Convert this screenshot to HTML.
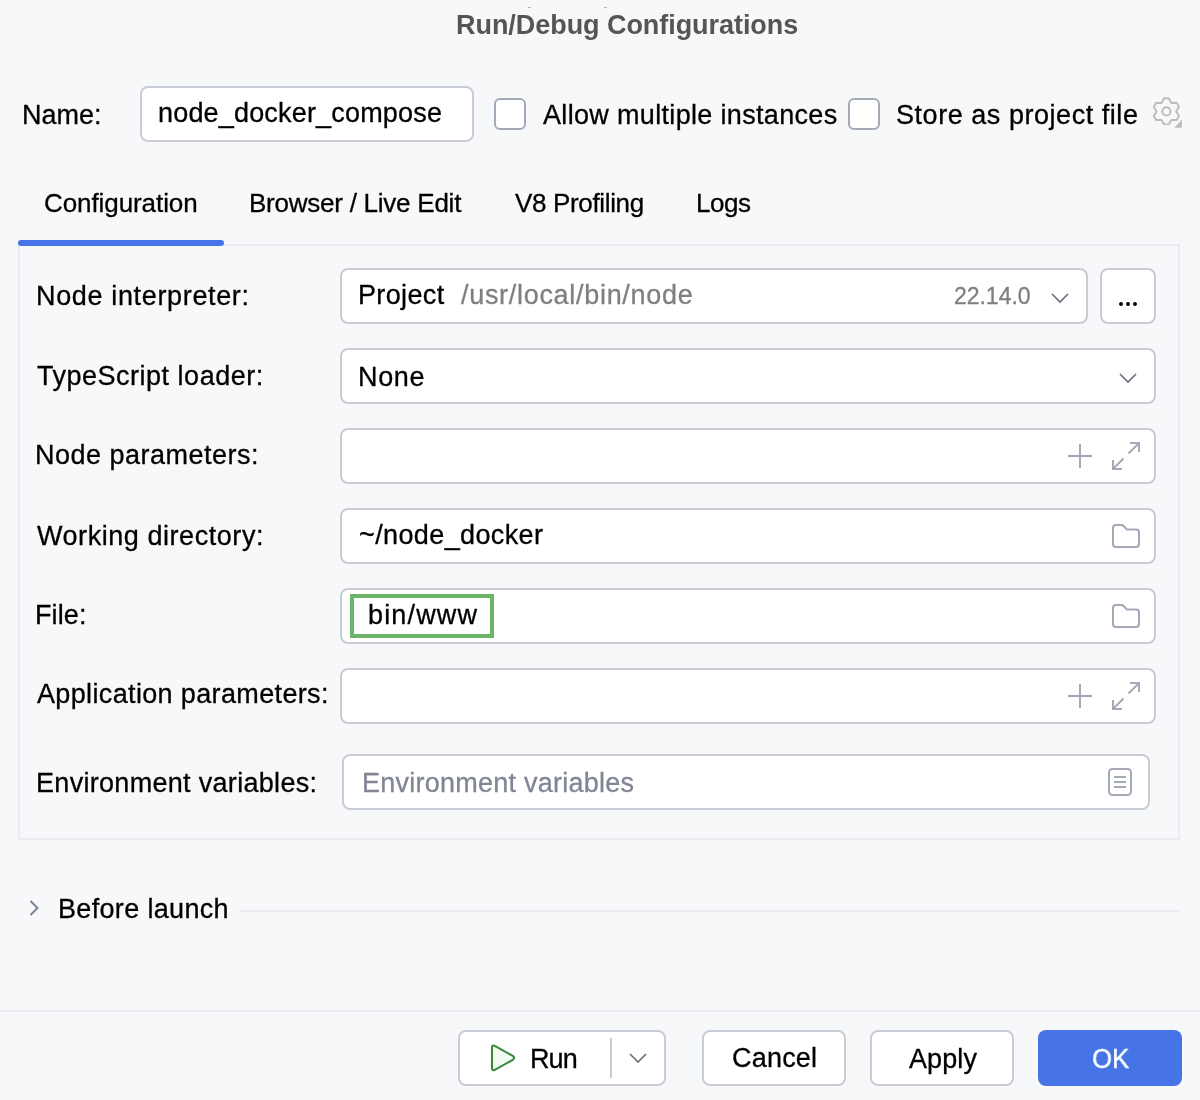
<!DOCTYPE html>
<html><head><meta charset="utf-8"><style>
html,body{margin:0;padding:0}
body{width:1200px;height:1100px;background:#F7F8FA;position:relative;overflow:hidden;font-family:"Liberation Sans",sans-serif}
.b{position:absolute;box-sizing:border-box}
.t{position:absolute;white-space:pre;will-change:transform;-webkit-text-stroke:0.3px currentColor;font-family:"Liberation Sans",sans-serif}
</style></head><body>
<div class="b" style="left:140px;top:86px;width:334px;height:56px;border:2px solid #C9CCD6;border-radius:8px;background:#fff"></div>
<div class="b" style="left:494px;top:98px;width:32px;height:32px;border:2px solid #A4A9B8;border-radius:6px;background:#fff"></div>
<div class="b" style="left:848px;top:98px;width:32px;height:32px;border:2px solid #A4A9B8;border-radius:6px;background:#fff"></div>
<svg class="b" style="left:1151.6px;top:96.6px" width="28.8" height="28.8" viewBox="0 0 28.8 28.8"><path d="M12.07 1.20 L16.73 1.20 L19.30 5.91 L24.66 5.79 L26.99 9.82 L24.20 14.40 L26.99 18.98 L24.66 23.01 L19.30 22.89 L16.73 27.60 L12.07 27.60 L9.50 22.89 L4.14 23.01 L1.81 18.98 L4.60 14.40 L1.81 9.82 L4.14 5.79 L9.50 5.91Z" fill="none" stroke="#BDBDBD" stroke-width="2" stroke-linejoin="round"/><circle cx="14.4" cy="14.4" r="4.1" fill="none" stroke="#BDBDBD" stroke-width="2"/></svg>
<svg class="b" style="left:1172px;top:117px" width="12" height="12" viewBox="0 0 12 12"><path d="M2.4 10.7 L9.9 2.2 V10.7 Z" fill="#BDBDBD"/></svg>
<div class="b" style="left:18px;top:244px;width:1162px;height:596px;border:2px solid #EBECF0"></div>
<div class="b" style="left:18px;top:240px;width:206px;height:6px;background:#4674E6;border-radius:3px"></div>
<div class="b" style="left:340px;top:268px;width:748px;height:56px;border:2px solid #C9CCD6;border-radius:8px;background:#fff"></div>
<div class="b" style="left:1100px;top:268px;width:56px;height:56px;border:2px solid #C9CCD6;border-radius:8px;background:#fff"></div>
<div class="b" style="left:340px;top:348px;width:816px;height:56px;border:2px solid #C9CCD6;border-radius:8px;background:#fff"></div>
<div class="b" style="left:340px;top:428px;width:816px;height:56px;border:2px solid #C9CCD6;border-radius:8px;background:#fff"></div>
<div class="b" style="left:340px;top:508px;width:816px;height:56px;border:2px solid #C9CCD6;border-radius:8px;background:#fff"></div>
<div class="b" style="left:340px;top:588px;width:816px;height:56px;border:2px solid #C9CCD6;border-radius:8px;background:#fff"></div>
<div class="b" style="left:340px;top:668px;width:816px;height:56px;border:2px solid #C9CCD6;border-radius:8px;background:#fff"></div>
<div class="b" style="left:342px;top:754px;width:808px;height:56px;border:2px solid #C9CCD6;border-radius:8px;background:#fff"></div>
<svg class="b" style="left:1118px;top:300px" width="22" height="8" viewBox="0 0 22 8"><circle cx="3" cy="4" r="1.95" fill="#000"/><circle cx="10" cy="4" r="1.95" fill="#000"/><circle cx="17" cy="4" r="1.95" fill="#000"/></svg>
<svg class="b" style="left:1050px;top:291px" width="20" height="14" viewBox="0 0 20 14"><path d="M2 3 L10 11 L18 3" fill="none" stroke="#6C707E" stroke-width="1.7" stroke-linecap="butt" stroke-linejoin="miter"/></svg>
<svg class="b" style="left:1117.5px;top:371px" width="20" height="14" viewBox="0 0 20 14"><path d="M2 3 L10 11 L18 3" fill="none" stroke="#6C707E" stroke-width="1.7" stroke-linecap="butt" stroke-linejoin="miter"/></svg>
<svg class="b" style="left:1067px;top:443px" width="26" height="26" viewBox="0 0 26 26"><path d="M1 13 H25 M13 1 V25" stroke="#A4A9B8" stroke-width="2"/></svg>
<svg class="b" style="left:1110px;top:440px" width="32" height="32" viewBox="0 0 32 32"><g fill="none" stroke="#A4A9B8" stroke-width="2"><path d="M20 3 H29 V12"/><path d="M29 3 L18.5 13.5"/><path d="M3 20 V29 H12"/><path d="M3 29 L13.5 18.5"/></g></svg>
<svg class="b" style="left:1067px;top:683px" width="26" height="26" viewBox="0 0 26 26"><path d="M1 13 H25 M13 1 V25" stroke="#A4A9B8" stroke-width="2"/></svg>
<svg class="b" style="left:1110px;top:680px" width="32" height="32" viewBox="0 0 32 32"><g fill="none" stroke="#A4A9B8" stroke-width="2"><path d="M20 3 H29 V12"/><path d="M29 3 L18.5 13.5"/><path d="M3 20 V29 H12"/><path d="M3 29 L13.5 18.5"/></g></svg>
<svg class="b" style="left:1112px;top:524px" width="28" height="24" viewBox="0 0 28 24"><path d="M4 1 H10.5 L15 5.5 H24 A3 3 0 0 1 27 8.5 V20 A3 3 0 0 1 24 23 H4 A3 3 0 0 1 1 20 V4 A3 3 0 0 1 4 1 Z" fill="none" stroke="#A4A9B8" stroke-width="2" stroke-linejoin="round"/></svg>
<svg class="b" style="left:1112px;top:604px" width="28" height="24" viewBox="0 0 28 24"><path d="M4 1 H10.5 L15 5.5 H24 A3 3 0 0 1 27 8.5 V20 A3 3 0 0 1 24 23 H4 A3 3 0 0 1 1 20 V4 A3 3 0 0 1 4 1 Z" fill="none" stroke="#A4A9B8" stroke-width="2" stroke-linejoin="round"/></svg>
<svg class="b" style="left:1108px;top:768px" width="24" height="28" viewBox="0 0 24 28"><g fill="none" stroke="#A4A9B8" stroke-width="2"><rect x="1" y="1" width="22" height="26" rx="3.5"/><path d="M6 9 H18 M6 14 H18 M6 19 H18"/></g></svg>
<div class="b" style="left:350px;top:594px;width:144px;height:44px;border:4px solid #6BB56B"></div>
<svg class="b" style="left:26px;top:897px" width="16" height="22" viewBox="0 0 16 22"><path d="M4.5 4 L11.5 11 L4.5 18" fill="none" stroke="#7E8291" stroke-width="2"/></svg>
<div class="b" style="left:240px;top:910px;width:940px;height:2px;background:#EBECF0;border-radius:0px"></div>
<div class="b" style="left:0px;top:1010px;width:1200px;height:2px;background:#EBECF0;border-radius:0px"></div>
<div class="b" style="left:458px;top:1030px;width:208px;height:56px;border:2px solid #C9CCD6;border-radius:8px;background:#fff"></div>
<svg class="b" style="left:488px;top:1042px" width="30" height="32" viewBox="0 0 30 32"><path d="M4 5.6 Q4 2.5 6.8 3.9 L24.8 13.9 Q27.4 15.85 24.8 17.8 L6.8 27.8 Q4 29.2 4 26.1 Z" fill="#F2FAF2" stroke="#3A8A3D" stroke-width="2.1" stroke-linejoin="round"/></svg>
<div class="b" style="left:610px;top:1038px;width:2px;height:40px;background:#C9CCD6;border-radius:0px"></div>
<svg class="b" style="left:628px;top:1051px" width="20" height="14" viewBox="0 0 20 14"><path d="M2 3 L10 11 L18 3" fill="none" stroke="#6C707E" stroke-width="1.7" stroke-linecap="butt" stroke-linejoin="miter"/></svg>
<div class="b" style="left:702px;top:1030px;width:144px;height:56px;border:2px solid #C9CCD6;border-radius:8px;background:#fff"></div>
<div class="b" style="left:870px;top:1030px;width:144px;height:56px;border:2px solid #C9CCD6;border-radius:8px;background:#fff"></div>
<div class="b" style="left:1038px;top:1030px;width:144px;height:56px;background:#4674E6;border-radius:8px"></div>
<div class="b" style="left:528px;top:7px;width:3px;height:1px;background:#B0B0B0;border-radius:0px"></div>
<div class="b" style="left:604px;top:7px;width:3px;height:1px;background:#B0B0B0;border-radius:0px"></div>
<div class="t" style="left:1092.05px;top:1046.3px;font-size:27px;line-height:27px;color:#fff;-webkit-text-stroke:0.4px #fff;transform:scaleX(0.954);transform-origin:0 0">OK</div>
<div class="t" style="left:455.80px;top:12.00px;font-size:27px;line-height:27px;font-weight:700;color:#555555;letter-spacing:-0.052px;-webkit-text-stroke:0">Run/Debug Configurations</div>
<div class="t" style="left:21.90px;top:101.90px;font-size:27px;line-height:27px;font-weight:400;color:#000000;letter-spacing:0.000px">Name:</div>
<div class="t" style="left:157.90px;top:100.00px;font-size:27px;line-height:27px;font-weight:400;color:#000000;letter-spacing:0.178px">node_docker_compose</div>
<div class="t" style="left:542.70px;top:102.00px;font-size:27px;line-height:27px;font-weight:400;color:#000000;letter-spacing:0.330px">Allow multiple instances</div>
<div class="t" style="left:896.00px;top:102.00px;font-size:27px;line-height:27px;font-weight:400;color:#000000;letter-spacing:0.540px">Store as project file</div>
<div class="t" style="left:44.00px;top:190.10px;font-size:26px;line-height:26px;font-weight:400;color:#000000;letter-spacing:-0.083px">Configuration</div>
<div class="t" style="left:249.00px;top:190.00px;font-size:26px;line-height:26px;font-weight:400;color:#000000;letter-spacing:-0.244px">Browser / Live Edit</div>
<div class="t" style="left:515.20px;top:189.50px;font-size:26px;line-height:26px;font-weight:400;color:#000000;letter-spacing:-0.345px">V8 Profiling</div>
<div class="t" style="left:696.05px;top:190.10px;font-size:26px;line-height:26px;font-weight:400;color:#000000;letter-spacing:-0.500px">Logs</div>
<div class="t" style="left:35.60px;top:282.50px;font-size:27px;line-height:27px;font-weight:400;color:#000000;letter-spacing:0.650px">Node interpreter:</div>
<div class="t" style="left:357.75px;top:282.10px;font-size:27px;line-height:27px;font-weight:400;color:#000000;letter-spacing:0.350px">Project</div>
<div class="t" style="left:460.50px;top:282.00px;font-size:27px;line-height:27px;font-weight:400;color:#7f7f7f;letter-spacing:0.700px">/usr/local/bin/node</div>
<div class="t" style="left:954.30px;top:285.00px;font-size:23px;line-height:23px;font-weight:400;color:#7f7f7f;letter-spacing:-0.033px">22.14.0</div>
<div class="t" style="left:36.50px;top:362.80px;font-size:27px;line-height:27px;font-weight:400;color:#000000;letter-spacing:0.506px">TypeScript loader:</div>
<div class="t" style="left:357.50px;top:364.20px;font-size:27px;line-height:27px;font-weight:400;color:#000000;letter-spacing:0.667px">None</div>
<div class="t" style="left:35.30px;top:442.00px;font-size:27px;line-height:27px;font-weight:400;color:#000000;letter-spacing:0.493px">Node parameters:</div>
<div class="t" style="left:37.10px;top:522.50px;font-size:27px;line-height:27px;font-weight:400;color:#000000;letter-spacing:0.553px">Working directory:</div>
<div class="t" style="left:358.80px;top:522.00px;font-size:27px;line-height:27px;font-weight:400;color:#000000;letter-spacing:0.383px">~/node_docker</div>
<div class="t" style="left:35.30px;top:601.90px;font-size:27px;line-height:27px;font-weight:400;color:#000000;letter-spacing:0.100px">File:</div>
<div class="t" style="left:367.75px;top:602.25px;font-size:27px;line-height:27px;font-weight:400;color:#000000;letter-spacing:1.150px">bin/www</div>
<div class="t" style="left:37.30px;top:681.30px;font-size:27px;line-height:27px;font-weight:400;color:#000000;letter-spacing:0.355px">Application parameters:</div>
<div class="t" style="left:35.60px;top:769.70px;font-size:27px;line-height:27px;font-weight:400;color:#000000;letter-spacing:0.305px">Environment variables:</div>
<div class="t" style="left:361.70px;top:770.20px;font-size:27px;line-height:27px;font-weight:400;color:#818594;letter-spacing:0.240px">Environment variables</div>
<div class="t" style="left:57.50px;top:895.80px;font-size:27px;line-height:27px;font-weight:400;color:#000000;letter-spacing:0.333px">Before launch</div>
<div class="t" style="left:530.00px;top:1045.50px;font-size:27px;line-height:27px;font-weight:400;color:#000000;letter-spacing:-0.900px">Run</div>
<div class="t" style="left:732.00px;top:1045.30px;font-size:27px;line-height:27px;font-weight:400;color:#000000;letter-spacing:0.200px">Cancel</div>
<div class="t" style="left:909.00px;top:1045.50px;font-size:27px;line-height:27px;font-weight:400;color:#000000;letter-spacing:0.100px">Apply</div>
</body></html>
